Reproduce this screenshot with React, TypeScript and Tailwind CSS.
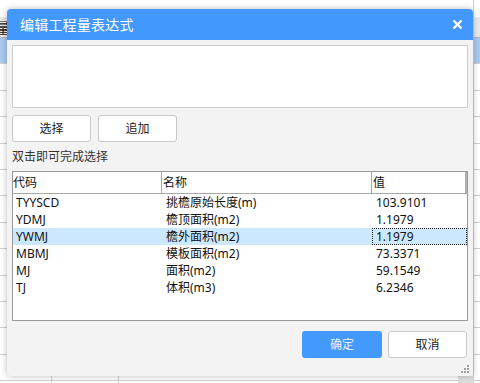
import React from "react"

const rows = [
  { code: "TYYSCD", name: "挑檐原始长度(m)", value: "103.9101" },
  { code: "YDMJ",   name: "檐顶面积(m2)",   value: "1.1979" },
  { code: "YWMJ",   name: "檐外面积(m2)",   value: "1.1979" },
  { code: "MBMJ",   name: "模板面积(m2)",   value: "73.3371" },
  { code: "MJ",     name: "面积(m2)",       value: "59.1549" },
  { code: "TJ",     name: "体积(m3)",       value: "6.2346" },
]

const font = { fontFamily: '"Noto Sans", "Noto Sans CJK SC", sans-serif' }

function Background() {
  return (
    <div className="absolute inset-0 bg-white">
      <div className="h-[17px]" />
      <div className="flex h-[21px] bg-[#e8e8e8] border-b border-[#b8b8b8]">
        <div className="w-[52px] border-r border-[#c8c8c8] text-[14px] leading-[21px] text-[#222] pl-[-4px]">
          <span className="-ml-[4px]">量</span>
        </div>
      </div>
      {Array.from({ length: 14 }).map((_, i) => (
        <div key={i}
             className={`flex h-[26.4px] border-b border-[#cfcfcf] ${i === 0 ? "bg-[#a9c9ee]" : ""}`}>
          <div className="w-[52px] border-r border-[#cfcfcf]" />
          <div className="w-[67px] border-r border-[#cfcfcf]" />
        </div>
      ))}
      <div className="absolute top-0 bottom-0 left-[473px] w-px bg-[#d0d0d0]" />
      <div className="absolute bottom-0 left-[458px] w-[15px] h-[7px] bg-[#dedede]" />
    </div>
  )
}

function Dialog() {
  return (
    <div className="absolute left-[7px] top-[9px] w-[466px] h-[367px] rounded-[4px] bg-[#f3f3f3] shadow-[0_0_6px_rgba(0,0,0,0.28)] flex flex-col">
      {/* Title bar */}
      <div className="h-[31px] shrink-0 rounded-t-[4px] bg-[#4298fd] flex items-center justify-between pl-[13px] pr-[10px]">
        <span className="text-[14px] text-white tracking-[0.2px]">编辑工程量表达式</span>
        <svg width="11" height="11" viewBox="0 0 11 11">
          <path d="M1.5 1.5 L9.5 9.5 M9.5 1.5 L1.5 9.5" stroke="white" strokeWidth="2.4" />
        </svg>
      </div>

      <div className="flex-1 flex flex-col px-[5px] pt-[5px] relative">
        {/* Expression box */}
        <div className="h-[63px] bg-white border border-[#cccccc]" />

        {/* Buttons */}
        <div className="flex gap-[7px] mt-[7px]">
          {["选择", "追加"].map(b => (
            <div key={b}
                 className="w-[79px] h-[27px] bg-white border border-[#c8c8c8] rounded-[3px] flex items-center justify-center text-[12px] text-[#222]">
              {b}
            </div>
          ))}
        </div>

        <p className="mt-[6px] h-[17px] text-[12px] leading-[17px] text-[#333]">双击即可完成选择</p>

        {/* List */}
        <div className="mt-[6px] h-[150px] bg-white border border-[#999999] text-[12px] text-[#111]">
          <div className="flex h-[22px] border-b border-[#a8a8a8]">
            <div className="w-[149px] border-r border-[#a8a8a8] leading-[22px]">代码</div>
            <div className="w-[210px] border-r border-[#a8a8a8] leading-[22px] pl-px">名称</div>
            <div className="flex-1 border-r-2 border-[#b0b0b0] leading-[22px] pl-px">值</div>
          </div>
          {rows.map((r, i) => (
            <div key={r.code}
                 className={`flex h-[17px] leading-[17px] ${i === 2 ? "bg-[#cce8ff]" : ""}`}>
              <div className="w-[149px] pl-[3px]">{r.code}</div>
              <div className="w-[210px] pl-[4px]">{r.name}</div>
              <div className={`flex-1 pl-[3px] ${i === 2 ? "border border-dotted border-[#222] leading-[15px]" : "pl-[4px]"}`}>
                {r.value}
              </div>
            </div>
          ))}
        </div>

        {/* Footer buttons */}
        <div className="flex justify-end gap-[6px] mt-[10px] pr-px">
          <div className="w-[80px] h-[27px] rounded-[3px] bg-[#4499fd] flex items-center justify-center text-[12px] text-[#eaf3ff]">
            确定
          </div>
          <div className="w-[79px] h-[27px] rounded-[3px] bg-white border border-[#c8c8c8] flex items-center justify-center text-[12px] text-[#222]">
            取消
          </div>
        </div>

        {/* Resize grip */}
        <svg className="absolute right-[3px] bottom-[2px]" width="9" height="9" viewBox="0 0 9 9">
          {[[7, 1], [4, 4], [7, 4], [1, 7], [4, 7], [7, 7]].map(([x, y], i) => (
            <rect key={i} x={x - 1} y={y - 1} width="2" height="2" fill="#a0a0a0" />
          ))}
        </svg>
      </div>
    </div>
  )
}

export default function App() {
  return (
    <div className="relative w-[480px] h-[383px] overflow-hidden" style={font}>
      <Background />
      <Dialog />
    </div>
  )
}
